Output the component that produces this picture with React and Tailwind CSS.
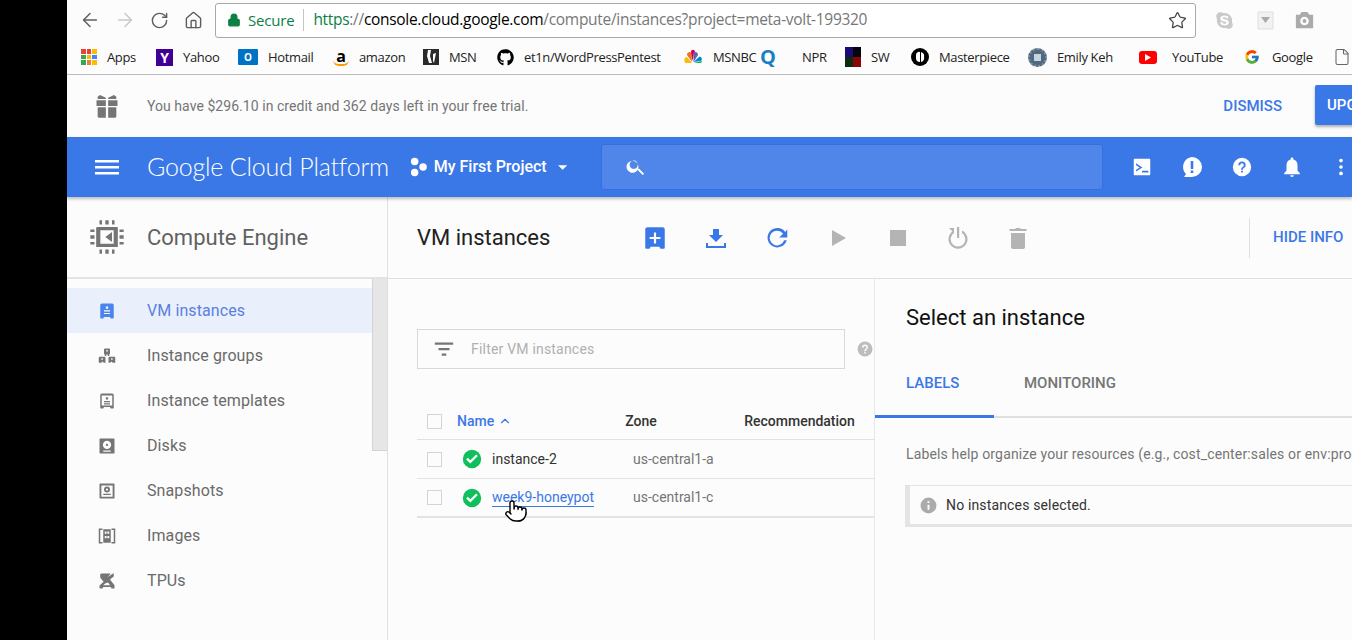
import React from "react";
import { ArrowLeft, ArrowRight, RotateCw, House, Star, Lock, File, Pointer, ChevronUp } from "lucide-react";
import { FaGithub, FaSkype } from "react-icons/fa";
import { FcGoogle } from "react-icons/fc";

const roboto = { fontFamily: "Roboto, sans-serif" };

const Ico = ({ size = 24, className = "", children }) => (
  <svg width={size} height={size} viewBox="0 0 24 24" fill="currentColor" className={`shrink-0 ${className}`}>
    {children}
  </svg>
);

// material-ish console icons
const VmIcon = ({ plus }) => (
  <>
    <path d="M5 2h14a2 2 0 0 1 2 2v17a1 1 0 0 1-1 1h-3l-1-2H8l-1 2H4a1 1 0 0 1-1-1V4a2 2 0 0 1 2-2z" />
    {plus ? (
      <path fill="#fcfcfc" d="M11 7h2v4h4v2h-4v4h-2v-4H7v-2h4z" />
    ) : (
      <path fill="#fcfcfc" d="M10.5 6h3v3h-3zM8 11h8v1.6H8zM8 14.5h8v1.6H8z" />
    )}
  </>
);

const navItems = [
  {
    label: "VM instances",
    active: true,
    icon: <VmIcon />,
  },
  {
    label: "Instance groups",
    icon: (
      <path d="M9 2h6l1 1v6l-1 1v2h-2v-2h-2v2H9v-2L8 9V3zm2 2v2h2V4zM2 13h7l1 1v7H7.500l-1-1.500h-1l-1 1.500H1v-7zm2.500 2v2h2v-2zM15 13h7l1 1v7h-3.500l-1-1.500h-1l-1 1.500H14v-7zm2.500 2v2h2v-2z" />
    ),
  },
  {
    label: "Instance templates",
    icon: (
      <path
        fillRule="evenodd"
        d="M5 2h14a2 2 0 0 1 2 2v17a1 1 0 0 1-1 1h-3l-1-2H8l-1 2H4a1 1 0 0 1-1-1V4a2 2 0 0 1 2-2zm0 2.500V18h14V4.500zM10.500 7h3v3h-3zM8 12h8v1.600H8zM8 15h8v1.600H8z"
      />
    ),
  },
  {
    label: "Disks",
    icon: (
      <path
        fillRule="evenodd"
        d="M3 2h18a1 1 0 0 1 1 1v19H3a1 1 0 0 1-1-1V3a1 1 0 0 1 1-1zm9 3a5.500 5.500 0 1 0 0 11 5.500 5.500 0 0 0 0-11zm0 4a1.500 1.500 0 1 1 0 3 1.500 1.500 0 0 1 0-3zM7 18v1.800h10V18z"
      />
    ),
  },
  {
    label: "Snapshots",
    icon: (
      <path
        fillRule="evenodd"
        d="M3 2h18a1 1 0 0 1 1 1v19H3a1 1 0 0 1-1-1V3a1 1 0 0 1 1-1zm1.500 2.500v15h15v-15zM12 6a4 4 0 1 1 0 8 4 4 0 0 1 0-8zm0 2.500a1.500 1.500 0 1 0 0 3 1.500 1.500 0 0 0 0-3zM7 15.500h10v1.800H7z"
      />
    ),
  },
  {
    label: "Images",
    icon: (
      <path d="M1 2h5v2H3v16h3v2H1zM18 2h5v20h-5v-2h3V4h-3zM7 3h10v18H7zm2 3v3h2.500V6zm3.500 0v3H15V6zm-3.500 6v3h2.500v-3zm3.500 0v3H15v-3z" />
    ),
  },
  {
    label: "TPUs",
    icon: (
      <path d="M4 2h13l-4 4.500L20 2h1v4l-5 4 6 7.500V22h-4l-1-2H7l-1 2H3a1 1 0 0 1-1-1v-3l5.500-5L3 7.500V3zm6 13l-3 2.500h9L13.500 14z" />
    ),
  },
];

const Bookmark = ({ icon, label, className = "" }) => (
  <div className={`flex items-center shrink-0 ${className}`}>
    {icon}
    {label && <span className="ml-[10px] text-[13px] leading-4 tracking-[-0.35px] text-[#222] whitespace-nowrap">{label}</span>}
  </div>
);

const Tile = ({ className = "", children }) => (
  <span className={`w-4 h-4 flex items-center justify-center overflow-hidden shrink-0 ${className}`}>{children}</span>
);

const AppsGrid = () => (
  <span className="grid grid-cols-3 gap-[1px] w-[16px] h-[16px] shrink-0">
    <i className="bg-[#ea4335]" /><i className="bg-[#ea4335]" /><i className="bg-[#fbbc05]" />
    <i className="bg-[#34a853]" /><i className="bg-[#fbbc05]" /><i className="bg-[#4285f4]" />
    <i className="bg-[#34a853]" /><i className="bg-[#ea8335]" /><i className="bg-[#fbbc05]" />
  </span>
);

const Peacock = () => (
  <svg width="20" height="16" viewBox="0 0 20 16" className="shrink-0">
    <path fill="#fbbc05" d="M9 14H2.500C.5 12 1 8 4 8z" />
    <path fill="#f37021" d="M9 13L4 6c0-3 3-4 4.500-2z" />
    <path fill="#cc004c" d="M9.500 12L8 3c0-3 4-3 4 0l-1 1-1.500 8z" />
    <path fill="#6460aa" d="M10.500 13L15 6c0-3-3-4-4.500-2z" />
    <path fill="#0089d0" d="M10.500 13L16 8c2-1 4 2 2 4z" />
    <path fill="#0db14b" d="M10.500 14H17c2 0 2-2 2-2z" />
  </svg>
);

const Toolbar = () => (
  <div className="flex items-center gap-[36px] ml-[76px]">
    <Ico size={26} className="text-[#3b78e7]"><VmIcon plus /></Ico>
    <Ico size={24} className="text-[#3b78e7]"><path d="M19 9h-4V3H9v6H5l7 7zM2 17v5h20v-5h-2v3H4v-3z" /></Ico>
    <Ico size={26} className="text-[#3b78e7]"><path d="M19.600 6.400A9 9 0 1 0 21 14h-2.400a6.800 6.800 0 1 1-1-6L14 11.500h7.500V4z" /></Ico>
    <Ico size={24} className="text-[#b4b4b4]"><path d="M6 4l14 8-14 8z" /></Ico>
    <Ico size={24} className="text-[#b4b4b4]"><path d="M4 4h16v16H4z" /></Ico>
    <Ico size={24} className="text-[#b4b4b4]"><path d="M11 1h2.200v11H11zM16 4.600a9.500 9.500 0 1 1-8 0V7a7.300 7.300 0 1 0 8 0z" /><path d="M3 2l5 0 0 5z" /></Ico>
    <Ico size={24} className="text-[#b4b4b4]"><path d="M5 7h14v14a2 2 0 0 1-2 2H7a2 2 0 0 1-2-2zM3.500 3H9l1-1h4l1 1h5.500v2h-17z" /></Ico>
  </div>
);

const Row = ({ name, zone, link, thick }) => (
  <div className={`relative flex items-center h-[39px] border-b border-[#e3e3e3] ${thick ? "border-b-2" : ""}`}>
    <span className="ml-[10px] w-[15px] h-[15px] border border-[#d4d4d4] bg-[#fcfcfc]" />
    <Ico size={20} className="ml-[20px] text-[#0fbf5b]">
      <circle cx="12" cy="12" r="11" />
      <path fill="#fcfcfc" d="M10 17.500L5 12.500l2-2 3 3 7-7 2 2z" />
    </Ico>
    <div className="ml-[10px] w-[141px] text-[14px]">
      {link ? (
        <span className="text-[#3b78e7] border-b border-[#3b78e7] pb-[1px]">{name}</span>
      ) : (
        <span className="text-[#333]">{name}</span>
      )}
    </div>
    <span className="text-[14px] text-[#757575]">{zone}</span>
    {link && (
      <Pointer size={24} strokeWidth={1.4} fill="#fff" className="absolute left-[87px] top-[20px] text-black" />
    )}
  </div>
);

export default function App() {
  return (
    <div className="w-[1352px] h-[640px] overflow-hidden flex bg-black" style={roboto}>
      <div className="w-[67px] shrink-0 bg-black" />
      <div className="w-[1285px] shrink-0 flex flex-col bg-[#fcfcfc] overflow-hidden">
        {/* browser toolbar */}
        <div className="h-[40px] flex items-center shrink-0 bg-[#fcfcfc]">
          <ArrowLeft size={22} strokeWidth={1.6} className="ml-[12px] text-[#5f5f5f]" />
          <ArrowRight size={22} strokeWidth={1.6} className="ml-[13px] text-[#c8c8c8]" />
          <RotateCw size={19} strokeWidth={1.8} className="ml-[14px] text-[#5f5f5f]" />
          <House size={19} strokeWidth={1.8} className="ml-[15px] text-[#5f5f5f]" />
          <div className="ml-[12px] w-[981px] h-[35px] border border-[#a9a9a9] rounded-[3px] bg-white flex items-center" style={{ fontFamily: "'Open Sans', sans-serif" }}>
            <Lock size={14} fill="#0b8043" strokeWidth={2} className="ml-[11px] text-[#0b8043]" />
            <span className="ml-[7px] text-[15px] tracking-[-0.2px] text-[#0b8043]">Secure</span>
            <span className="ml-[9px] w-px h-[22px] bg-[#c4c4c4]" />
            <span className="ml-[9px] text-[15.500px] tracking-[-0.3px] whitespace-nowrap text-[#777]">
              <span className="text-[#0b8043]">https</span>://<span className="text-black">console.cloud.google.com</span>/compute/instances?project=meta-volt-199320
            </span>
            <Star size={19} strokeWidth={1.6} className="ml-auto mr-[8px] text-[#444]" />
          </div>
          <FaSkype size={19} className="ml-[19px] text-[#c9c9c9]" />
          <svg width="19" height="19" viewBox="0 0 19 19" className="ml-[22px]">
            <path fill="#f2f2f2" stroke="#dedede" d="M2 1h15v17H2z" />
            <path fill="#aaa" d="M5 6h9l-4.500 6z" />
          </svg>
          <Ico size={23} className="ml-[18px] text-[#ababab]">
            <path fillRule="evenodd" d="M9 3h6l2 3h4v14H3V6h4zm3 5a4.500 4.500 0 1 0 0 9 4.500 4.500 0 0 0 0-9zm0 2.500a2 2 0 1 1 0 4 2 2 0 0 1 0-4z" />
          </Ico>
        </div>
        {/* bookmarks */}
        <div className="h-[35px] flex items-center shrink-0 border-b border-[#bdbdbd] pl-[14px] relative" style={{ fontFamily: "'Open Sans', sans-serif" }}>
          <Bookmark icon={<AppsGrid />} label="Apps" className="w-[75px]" />
          <Bookmark className="w-[82px]" label="Yahoo" icon={<Tile className="w-[17px] h-[17px] bg-[#410093] text-white text-[14px] font-bold">Y</Tile>} />
          <Bookmark className="w-[95px]" label="Hotmail" icon={<Tile className="w-[20px] bg-[#0072c6] text-white text-[10px] font-bold rounded-[1px]">O</Tile>} />
          <Bookmark className="w-[90px]" label="amazon" icon={<Tile className="w-[16px] h-[18px] text-black text-[16px] font-bold leading-none border-b-2 border-[#f90] rounded-b-[6px]">a</Tile>} />
          <Bookmark className="w-[74px]" label="MSN" icon={
            <Tile className="w-[16px] h-[16px] bg-[#2b2b2b]">
              <svg width="16" height="16" viewBox="0 0 16 16"><path fill="#fff" d="M5 1h3L7 7l2 7H6L4 7zM10 5l3-1-2 10-1-2z" /></svg>
            </Tile>
          } />
          <Bookmark className="w-[186px]" icon={<FaGithub size={17} className="text-black" />} label={<span className="block w-[137px] overflow-hidden">et1n/WordPressPentest</span>} />
          <Bookmark className="w-[77px]" icon={<Peacock />} label="MSNBC" />
          <Bookmark className="w-[85px]" label="NPR" icon={<span className="block w-[16px] text-[#1c7fc4] text-[20px] leading-none font-bold mr-[16px]">Q</span>} />
          <Bookmark className="w-[66px]" label="SW" icon={
            <span className="grid grid-cols-2 w-[16px] h-[20px] shrink-0">
              <i className="bg-[#1c0a78]" /><i className="bg-[#050510]" /><i className="bg-[#0c2c10]" /><i className="bg-[#8a0505]" />
            </span>
          } />
          <Bookmark className="w-[117px]" label="Masterpiece" icon={
            <Tile className="w-[18px] h-[18px] rounded-full bg-black">
              <svg width="12" height="12" viewBox="0 0 12 12"><path fill="#fff" d="M2 4a3 3 0 0 1 4-3v10a4 4 0 0 1-4-3zM7 1a4 4 0 0 1 3 5 4 4 0 0 1-3 5z" /></svg>
            </Tile>
          } />
          <Bookmark className="w-[111px]" label="Emily Keh" icon={
            <Tile className="w-[19px] h-[19px] rounded-full bg-[#4f6a80] border-2 border-dotted border-[#7d8f9e]">
              <span className="w-[7px] h-[7px] bg-[#c9d3db]" />
            </Tile>
          } />
          <Bookmark className="w-[105px]" label="YouTube" icon={
            <Tile className="w-[18px] h-[13px] bg-[#f00] rounded-[3px] mr-[5px]">
              <svg width="6" height="7" viewBox="0 0 6 7"><path fill="#fff" d="M0 0l6 3.500L0 7z" /></svg>
            </Tile>
          } />
          <Bookmark className="w-[89px]" label="Google" icon={<FcGoogle size={16} className="mr-[2px]" />} />
          <File size={18} strokeWidth={1.4} className="text-[#666]" />
        </div>
        {/* free trial bar */}
        <div className="h-[62px] flex items-center shrink-0 bg-[#fcfcfc]">
          <Ico size={28} className="ml-[26px] text-[#757575]">
            <path d="M3 7h8v5H3zM13 7h8v5h-8zM4 13h7v9H5a1 1 0 0 1-1-1zM13 13h7v8a1 1 0 0 1-1 1h-6zM6 2.500L11 5v1H4V4zM18 2.500L13 5v1h7V4z" />
          </Ico>
          <span className="ml-[26px] text-[14px] text-[#757575] tracking-[0.05px]">You have $296.10 in credit and 362 days left in your free trial.</span>
          <span className="ml-auto text-[15px] font-medium text-[#3b78e7]">DISMISS</span>
          <div className="ml-[33px] mr-[-40px] w-[77px] h-[40px] bg-[#3b78e7] rounded-[2px] shadow-[0_2px_3px_rgba(0,0,0,0.3)] pl-[12px] flex items-center text-[15px] font-medium text-white mb-[2px]">UPGRADE</div>
        </div>
        {/* blue header */}
        <div className="h-[60px] flex items-center shrink-0 bg-[#3b78e7] shadow-[0_2px_3px_rgba(0,0,0,0.25)] relative z-10 text-white">
          <Ico size={24} className="ml-[28px]"><path d="M0 5h24v2.500H0zM0 11h24v2.500H0zM0 17h24v2.500H0z" /></Ico>
          <span className="ml-[28px] text-[25px] whitespace-nowrap tracking-[-0.2px] font-light" style={{ fontFamily: "Lato, sans-serif" }}>Google Cloud Platform</span>
          <svg width="18" height="20" viewBox="0 0 18 20" className="ml-[21px]">
            <circle cx="5" cy="4" r="4" fill="#fff" /><circle cx="14" cy="10" r="4" fill="#fff" /><circle cx="5" cy="16" r="4" fill="#fff" />
          </svg>
          <span className="ml-[7px] text-[16px] font-medium whitespace-nowrap">My First Project</span>
          <svg width="10" height="5" viewBox="0 0 10 5" className="ml-[11px]"><path fill="#fff" d="M0 0h10L5 5z" /></svg>
          <div className="ml-[34px] w-[502px] h-[46px] rounded-[3px] bg-[#5085e9] border border-[#3470de] flex items-center shrink-0">
            <Ico size={22} className="ml-[23px]"><path d="M15.500 14h-.8l-.3-.3A6.500 6.500 0 1 0 14 14.700l.3.3v.8l5 5 1.500-1.500zm-6 0a4.500 4.500 0 1 1 0-9 4.500 4.500 0 0 1 0 9z" /></Ico>
          </div>
          <Ico size={22} className="ml-[28px]"><path fillRule="evenodd" d="M4 3h16a1 1 0 0 1 1 1v16a1 1 0 0 1-1 1H4a1 1 0 0 1-1-1V4a1 1 0 0 1 1-1zm1.500 5v2l4 2.500-4 2.500v2l7-4.500zM12 16v2h7v-2z" /></Ico>
          <Ico size={24} className="ml-[27px]"><path fillRule="evenodd" d="M12 2a10 10 0 0 1 0 20H4l2-3A10 10 0 0 1 12 2zm-1.300 4v8h2.600V6zm0 9.500v2.500h2.600v-2.500z" /></Ico>
          <Ico size={22} className="ml-[27px]"><path fillRule="evenodd" d="M12 2a10 10 0 1 1 0 20 10 10 0 0 1 0-20zm-1 14v2h2v-2zm1-10a4 4 0 0 0-4 4h2a2 2 0 1 1 4 0c0 2-3 1.800-3 5h2c0-2.200 3-2.500 3-5a4 4 0 0 0-4-4z" /></Ico>
          <Ico size={22} className="ml-[28px]"><path d="M12 1.500a1.500 1.500 0 0 1 1.500 1.500v.8A6.500 6.500 0 0 1 18 10v6l2.500 2.500V20h-17v-1.500L6 16v-6a6.500 6.500 0 0 1 4.500-6.200V3A1.500 1.500 0 0 1 12 1.500zM10 21h4a2 2 0 0 1-4 0z" /></Ico>
          <Ico size={22} className="ml-[27px]"><circle cx="12" cy="5" r="2" /><circle cx="12" cy="12" r="2" /><circle cx="12" cy="19" r="2" /></Ico>
        </div>
        {/* console body */}
        <div className="flex flex-1 min-h-0 bg-[#fcfcfc]">
          {/* left nav */}
          <div className="w-[321px] shrink-0 flex flex-col border-r border-[#e0e0e0]">
            <div className="h-[82px] shrink-0 flex items-center border-b-2 border-[#e3e3e3]">
              <Ico size={40} className="ml-[20px] text-[#757575]">
                <path fillRule="evenodd" d="M6 6h12a1 1 0 0 1 .5.500V18H5.500V6.500zM8 8v8h8V8zM2 7.500h2.500V9H2zM2 11h2.500v2H2zM2 15h2.500v1.500H2zM19.500 7.500H22V9h-2.500zM19.500 11H22v2h-2.500zM19.500 15H22v1.500h-2.500zM7.500 2H9v2.500H7.500zM11 2h2v2.500h-2zM15 2h1.500v2.500H15zM7.500 19.500H9V22H7.500zM11 19.500h2V22h-2zM15 19.500h1.500V22H15z" />
                <path d="M15 9v6l-4-3z" />
              </Ico>
              <span className="ml-[20px] text-[22px] text-[#616161]">Compute Engine</span>
            </div>
            <div className="flex flex-1 min-h-0">
              <div className="flex-1 pt-[9px]">
                {navItems.map((item) => (
                  <div key={item.label} className={`h-[45px] flex items-center ${item.active ? "bg-[#e9f0fb] text-[#3b78e7]" : "text-[#757575]"}`}>
                    <Ico size={18} className={`ml-[31px] ${item.active ? "text-[#4a84ec]" : "text-[#757575]"}`}>{item.icon}</Ico>
                    <span className={`ml-[31px] text-[16px] tracking-[0.1px] ${item.active ? "text-[#5a7fe0]" : "text-[#6a6a6a]"}`}>{item.label}</span>
                  </div>
                ))}
              </div>
              <div className="w-[15px] h-[172px] bg-[#e6e6e6] border-l border-b border-[#d4d4d4]" />
            </div>
          </div>
          {/* main column */}
          <div className="flex-1 min-w-0 flex flex-col">
            <div className="h-[82px] shrink-0 flex items-center border-b border-[#e0e0e0]">
              <span className="ml-[29px] w-[149px] shrink-0 text-[22px] text-[#212121]">VM instances</span>
              <div className="-ml-[0px]"><Toolbar /></div>
              <span className="ml-[219px] w-px h-[40px] bg-[#e0e0e0]" />
              <span className="ml-[23px] text-[15px] font-medium whitespace-nowrap text-[#3b78e7]">HIDE INFO</span>
            </div>
            <div className="flex flex-1 min-h-0">
              <div className="w-[487px] shrink-0 border-r border-[#e8e8e8] pt-[50px]">
                <div className="flex items-center">
                  <div className="ml-[29px] w-[430px] h-[40px] border border-[#d8d8d8] flex items-center">
                    <Ico size={22} className="ml-[15px] text-[#757575]"><path d="M2 5h20v2.400H2zM6 11h12v2.400H6zM9.500 17h5v2.400h-5z" /></Ico>
                    <span className="ml-[16px] text-[14px] tracking-[0.2px] text-[#b0b0b0]">Filter VM instances</span>
                  </div>
                  <Ico size={18} className="ml-[11px] text-[#bdbdbd]"><path fillRule="evenodd" d="M12 2a10 10 0 1 1 0 20 10 10 0 0 1 0-20zm-1 14v2h2v-2zm1-10a4 4 0 0 0-4 4h2a2 2 0 1 1 4 0c0 2-3 1.800-3 5h2c0-2.200 3-2.500 3-5a4 4 0 0 0-4-4z" /></Ico>
                </div>
                <div className="ml-[29px] mt-[34px]">
                  <div className="flex items-center h-[37px] border-b border-[#e0e0e0] text-[14px] font-medium">
                    <span className="ml-[10px] w-[15px] h-[15px] border border-[#d4d4d4]" />
                    <span className="ml-[15px] text-[#3b78e7] font-medium">Name</span>
                    <ChevronUp size={14} className="ml-[4px] text-[#3b78e7]" />
                    <span className="ml-[113px] w-[119px] text-[#333]">Zone</span>
                    <span className="text-[#333] whitespace-nowrap">Recommendation</span>
                  </div>
                  <Row name="instance-2" zone="us-central1-a" />
                  <Row name="week9-honeypot" zone="us-central1-c" link thick />
                </div>
              </div>
              {/* info panel */}
              <div className="flex-1 min-w-0 overflow-hidden">
                <div className="ml-[31px] mt-[26px] text-[22px] leading-[26px] text-[#111]">Select an instance</div>
                <div className="mt-[40px] h-[47px] flex border-b-2 border-[#e0e0e0] text-[15px] font-medium">
                  <div className="w-[119px] h-[47px] border-b-[3px] border-[#3b78e7] pl-[31px] text-[#3b78e7] leading-[24px]">LABELS</div>
                  <div className="ml-[30px] text-[#757575] leading-[24px]">MONITORING</div>
                </div>
                <div className="ml-[31px] mt-[26px] text-[14px] tracking-[0.15px] text-[#757575] whitespace-nowrap">Labels help organize your resources (e.g., cost_center:sales or env:prod)</div>
                <div className="ml-[30px] mt-[20px] w-[600px] h-[42px] flex items-center border-l-[5px] border-b-[3px] border-t border-[#e4e4e4]">
                  <Ico size={19} className="ml-[9px] text-[#ababab]"><path fillRule="evenodd" d="M12 2a10 10 0 1 1 0 20 10 10 0 0 1 0-20zm-1.200 4.500v2.400h2.400V6.500zm0 4.500v6.500h2.400V11z" /></Ico>
                  <span className="ml-[8px] text-[14px] tracking-[0.15px] text-[#333]">No instances selected.</span>
                </div>
              </div>
            </div>
          </div>
        </div>
      </div>
    </div>
  );
}
